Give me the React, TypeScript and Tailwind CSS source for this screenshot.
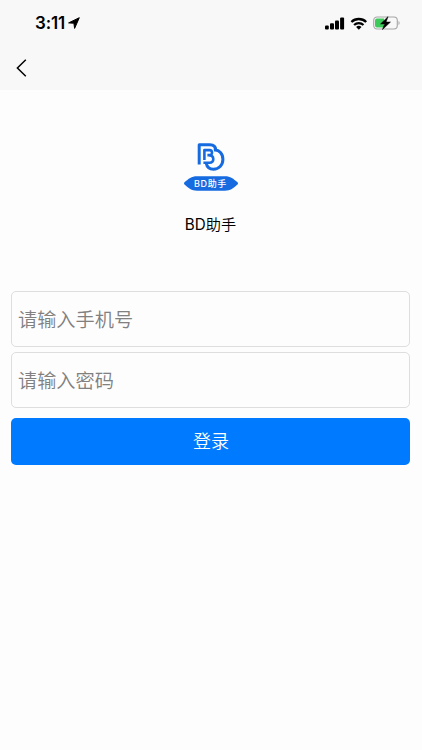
import React, { useState } from 'react';

const StatusIcons: React.FC = () => (
  <div className="flex items-center">
    <svg width="20" height="13" viewBox="0 0 20 13" fill="black">
      <rect x="0" y="8.5" width="3.8" height="4" rx="1" />
      <rect x="5" y="6.3" width="4" height="6.2" rx="1" />
      <rect x="10" y="3.5" width="4" height="9" rx="1" />
      <rect x="15.1" y="0.5" width="4" height="12" rx="1" />
    </svg>
    <svg className="ml-[5px]" width="18" height="13" viewBox="0 0 18 13" fill="none" stroke="black">
      <path d="M1.4 5A10.8 10.8 0 0 1 16.2 5" strokeWidth="2.4" />
      <path d="M4.1 8A6.8 6.8 0 0 1 13.5 8" strokeWidth="2.2" />
      <path d="M8.8 12.7 6.1 10A3.8 3.8 0 0 1 11.5 10Z" fill="black" stroke="none" />
    </svg>
    <svg className="ml-[5px]" width="28" height="14" viewBox="0 0 28 14">
      <rect x="0.7" y="1" width="23.6" height="12" rx="3.4" fill="none" stroke="#a5a5a5" strokeWidth="1.1" />
      <path d="M25.5 5v4c1.5-.6 1.5-3.4 0-4Z" fill="#a5a5a5" />
      <path d="M4 2.5h7v9H4a2 2 0 0 1-2-2v-5a2 2 0 0 1 2-2Z" fill="#3ccb5a" />
      <path d="M15 .7 7.6 7.9h4.1L9.5 13.5 17.4 6.1h-4.4Z" fill="black" stroke="black" strokeWidth="0.6" />
    </svg>
  </div>
);

const Logo: React.FC = () => (
  <div className="flex flex-col items-center">
    <svg width="28" height="28" viewBox="0 0 28 28" fill="none" stroke="#176be0" strokeWidth="3" strokeLinejoin="round">
      <path d="M2.2 21.4V1.8H13C16.5 1.8 18.6 3.8 18.8 7" />
      <path d="M7.4 17V7.1H12.5C15.8 7.1 15.9 12.1 12.5 12.1H10.4" strokeWidth="2.6" />
      <path d="M12.2 12.2C17.5 12.3 17.7 19.7 12.6 19.7H6.4" strokeWidth="2.6" />
      <path d="M16.8 7.1C22.4 6.3 26 11 25.9 16.5 25.8 22.3 21.8 26.2 16.5 26.2 12.6 26.2 9.9 24 9.2 20" />
    </svg>
    <div className="relative mt-[5px] flex h-[15px] w-[54px] items-center justify-center">
      <svg className="absolute inset-0" width="54" height="15" viewBox="0 0 54 15" fill="#176be0">
        <path d="M.5 6.2C4.5 2.8 7.5.2 13 .2H41C46.5 .2 49.5 2.8 53.5 6.2Q54.5 7.4 53.5 8.6C49.5 12.2 46.5 14.8 41 14.8H13C7.5 14.8 4.5 12.2 .5 8.6Q-.5 7.4 .5 6.2Z" />
      </svg>
      <span className="relative text-[9px] leading-none font-medium tracking-[0.6px] whitespace-nowrap text-white">BD助手</span>
    </div>
  </div>
);

const fieldClass =
  'block h-[56px] w-full rounded-[5px] border border-[#dedede] bg-[#fdfdfd] px-[6px] pt-[2px] text-[19.2px] font-[350] text-black outline-none placeholder:text-[#808080]';

export default function App() {
  const [phone, setPhone] = useState('');
  const [password, setPassword] = useState('');

  return (
    <div className="h-[750px] w-full overflow-hidden bg-[#fdfdfd] font-['Inter','Noto_Sans_CJK_SC',sans-serif] text-black">
      <header className="h-[90px] bg-[#f8f8f8]">
        {/* Status bar */}
        <div className="flex h-[46px] items-center justify-between pr-[21px] pl-[35px]">
          <div className="flex items-center">
            <span className="pt-[2px] text-[17px] font-semibold tracking-[-0.1px]">3:11</span>
            <svg className="ml-[3px]" width="12" height="12" viewBox="0 0 12 12">
              <path d="M.6 5.9 11.3.7 6.6 11.4 5.9 6.2Z" fill="black" stroke="black" strokeWidth="1" strokeLinejoin="round" />
            </svg>
          </div>
          <StatusIcons />
        </div>
        {/* Navigation */}
        <div className="flex h-11 items-center pl-4">
          <button type="button" aria-label="返回">
            <svg width="11" height="18" viewBox="0 0 11 18" fill="none" stroke="black" strokeWidth="1.5">
              <path d="M9.8.8 1.4 9 9.8 17.2" />
            </svg>
          </button>
        </div>
      </header>

      <main className="pr-3 pl-[11px] pt-[53px]">
        <Logo />
        <h1 className="mt-[22px] text-center text-[15.2px] leading-6 font-[350]">
          <span className="font-normal">BD</span>助手
        </h1>

        <form className="mt-[54px]" onSubmit={(e) => e.preventDefault()}>
          <input
            className={fieldClass}
            type="tel"
            placeholder="请输入手机号"
            value={phone}
            onChange={(e) => setPhone(e.target.value)}
          />
          <input
            className={`${fieldClass} mt-[5px]`}
            type="password"
            placeholder="请输入密码"
            value={password}
            onChange={(e) => setPassword(e.target.value)}
          />
          <button type="submit" className="mt-[10px] block h-[47px] w-full rounded-[5px] bg-[#007aff] pl-px text-[18px] font-[350] text-white">
            登录
          </button>
        </form>
      </main>
    </div>
  );
}
